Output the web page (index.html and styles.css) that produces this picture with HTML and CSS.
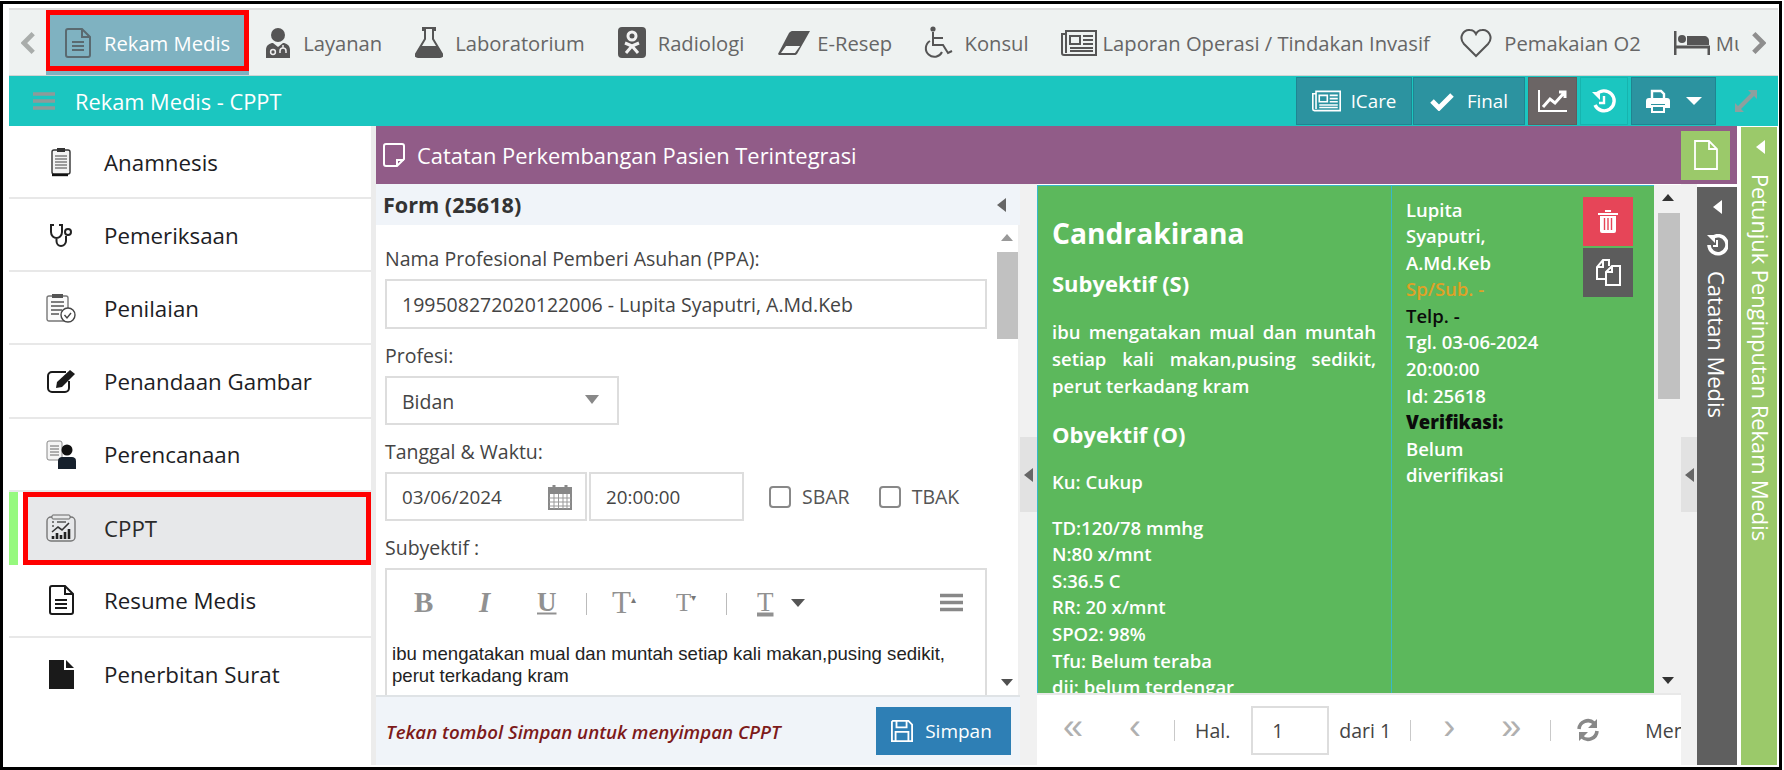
FILE: index.html
```html
<!DOCTYPE html>
<html lang="id">
<head>
<meta charset="utf-8">
<title>Rekam Medis - CPPT</title>
<link rel="stylesheet" href="styles.css">
</head>
<body>
<div class="frame">
  <nav class="tabbar">
    <svg class="chev" viewBox="0 0 16 24"><path d="M13 2 3 12l10 10" fill="none" stroke="#a9adab" stroke-width="5"/></svg>
    <div class="tabs">
      <a class="tab active"><svg class="ti" width="28" height="32" viewBox="0 0 28 32"><path d="M2 4a2 2 0 0 1 2-2h14l8 8v18a2 2 0 0 1-2 2H4a2 2 0 0 1-2-2zM18 2v8h8M8 15h12M8 19h12M8 23h12" fill="none" stroke="#5a6a70" stroke-width="2"/></svg>Rekam Medis</a>
      <a class="tab"><svg class="ti" width="26" height="32" viewBox="0 0 26 32"><circle cx="13" cy="8" r="7" fill="#555"/><path d="M1 31v-8c0-5 4-7 7-7l5 4 5-4c3 0 7 2 7 7v8z" fill="#555"/><circle cx="8" cy="25" r="2.4" fill="none" stroke="#eee" stroke-width="1.5"/><path d="M18 18v3m-3 5v-2a3 3 0 0 1 6 0v2" fill="none" stroke="#eee" stroke-width="1.5"/></svg>Layanan</a>
      <a class="tab"><svg class="ti" width="28" height="31" viewBox="0 0 28 31"><path d="M8 1h12v2h-2v9l9 15c1 2 0 3-2 3H3c-2 0-3-1-2-3l9-15V3H8z" fill="none" stroke="#555" stroke-width="2"/><path d="M6 19h16l5 9c0 2-1 2-2 2H3c-1 0-2 0-2-2z" fill="#555"/></svg>Laboratorium</a>
      <a class="tab"><svg class="ti" width="28" height="31" viewBox="0 0 28 31"><rect width="28" height="31" rx="4" fill="#555"/><circle cx="14" cy="9" r="4" fill="none" stroke="#f2f2f2" stroke-width="3"/><path d="m7 16 7 3 7-3M14 19l-6 7M14 19l6 7" fill="none" stroke="#f2f2f2" stroke-width="3"/></svg>Radiologi</a>
      <a class="tab tab-tight"><svg class="ti" width="34" height="26" viewBox="0 0 34 26"><path d="M1 24 12 3c1-1 2-2 3-2h18L20 24c-1 1-2 1-3 1H2z" fill="#555"/><path d="M4 23 9 16h14l-5 7z" fill="#f2f5f4"/></svg>E-Resep</a>
      <a class="tab tab-konsul"><svg class="ti" width="30" height="33" viewBox="0 0 30 33"><circle cx="10" cy="3" r="2.6" fill="#555"/><path d="M10 6v13h10l5 8 4-2M10 12h10M7 15a8.5 8.5 0 1 0 12 11" fill="none" stroke="#555" stroke-width="2"/></svg>Konsul</a>
      <a class="tab tab-tight"><svg class="ti" width="36" height="26" viewBox="0 0 36 26"><path d="M5 3V1h30v24H3a2 2 0 0 1-2-2V4h4v19" fill="none" stroke="#555" stroke-width="2"/><path d="M9 6h10v8H9z" fill="none" stroke="#555" stroke-width="2"/><path d="M22 6h10M22 10h10M22 14h10M9 18h23M9 21h23" stroke="#555" stroke-width="2"/></svg>Laporan Operasi / Tindakan Invasif</a>
      <a class="tab"><svg class="ti" width="32" height="30" viewBox="0 0 32 30"><path d="M16 28 4 16C-2 9 4 1 10 2c3 0 5 2 6 4 1-2 3-4 6-4 6-1 12 7 6 14z" fill="none" stroke="#555" stroke-width="2"/></svg>Pemakaian O2</a>
      <a class="tab tab-tight"><svg class="ti" width="36" height="26" viewBox="0 0 36 26"><path d="M1 1v24M35 25V17H1" fill="none" stroke="#555" stroke-width="3"/><circle cx="8" cy="9" r="4" fill="#555"/><path d="M13 6h17c3 0 5 2 5 5v4H13z" fill="#555"/></svg>Mu</a>
    </div>
    <svg class="chev" viewBox="0 0 16 24"><path d="m3 2 10 10L3 22" fill="none" stroke="#8e8e8e" stroke-width="5"/></svg>
  </nav>

  <header class="appbar">
    <svg class="burger" width="24" height="20" viewBox="0 0 24 20"><path d="M1 3h22M1 10h22M1 17h22" stroke="#8e9a99" stroke-width="3.4"/></svg>
    <h1 class="apptitle">Rekam Medis - CPPT</h1>
    <div class="tools">
      <button class="tool w-icare"><svg width="29" height="22" viewBox="0 0 36 26"><path d="M5 3V1h30v24H3a2 2 0 0 1-2-2V4h4v19" fill="none" stroke="#fff" stroke-width="2"/><path d="M9 6h10v8H9z" fill="none" stroke="#fff" stroke-width="2"/><path d="M22 6h10M22 10h10M22 14h10M9 18h23M9 21h23" stroke="#fff" stroke-width="2"/></svg>ICare</button>
      <button class="tool w-final"><svg width="24" height="20" viewBox="0 0 24 20"><path d="m2 10 7 7L22 4" fill="none" stroke="#fff" stroke-width="5"/></svg>Final</button>
      <button class="tool tool-dark"><svg width="30" height="24" viewBox="0 0 30 24"><path d="M1 1v21h28" fill="none" stroke="#fff" stroke-width="2"/><path d="m5 18 7-8 5 4 9-10M21 3h6v6" fill="none" stroke="#fff" stroke-width="3"/></svg></button>
      <button class="tool tool-teal"><svg width="24" height="24" viewBox="0 0 24 24"><path d="M4 6a10 10 0 1 1-1 10" fill="none" stroke="#fff" stroke-width="3.4"/><path d="M0 3h8v8z" fill="#fff"/><path d="M12 7v7H7" fill="none" stroke="#fff" stroke-width="2.4"/></svg></button>
      <button class="tool w-print"><svg width="24" height="24" viewBox="0 0 24 24"><path d="M6 9V2h9l3 3v4" fill="none" stroke="#fff" stroke-width="2.4"/><path d="M3 9h18a3 3 0 0 1 3 3v7h-5v-4H5v4H0v-7a3 3 0 0 1 3-3z" fill="#fff"/><path d="M6 17h12v6H6z" fill="none" stroke="#fff" stroke-width="2"/></svg><span class="caret-w"></span></button>
      <svg class="expand" width="24" height="24" viewBox="0 0 24 24"><path d="m14 1h9v9l-3-3L7 20l3 3H1v-9l3 3L17 4z" fill="#8e9f9e"/></svg>
    </div>
  </header>

  <div class="workspace">
    <aside class="sidebar">
      <a class="menu-item"><svg class="mi" width="22" height="30" viewBox="0 0 22 30"><rect x="2" y="3" width="18" height="24" rx="2" fill="#f3f3f3" stroke="#333" stroke-width="1.4"/><path d="M7 1h8v4H7z" fill="#333"/><path d="M5 9h12M5 12h12M5 15h12M5 18h12M5 21h12" stroke="#444" stroke-width="1.2"/><path d="M2 28h16" stroke="#111" stroke-width="2.4"/></svg>Anamnesis</a>
      <a class="menu-item"><svg class="mi" width="24" height="24" viewBox="0 0 24 24"><path d="M5 2H2v7c0 4 3 6 5.500 6S13 13 13 9V2h-3M7.500 15v3c0 3 2 5 4.500 5s5-2 5-5v-5" fill="none" stroke="#222" stroke-width="2"/><circle cx="19" cy="9" r="3" fill="none" stroke="#222" stroke-width="2"/></svg>Pemeriksaan</a>
      <a class="menu-item"><svg class="mi" width="30" height="30" viewBox="0 0 30 30"><rect x="1" y="3" width="21" height="25" rx="2" fill="#fafafa" stroke="#777" stroke-width="1.4"/><path d="M6 1h11v4H6z" fill="#555"/><path d="M5 9h13M5 13h13M5 17h11M5 21h8" stroke="#555" stroke-width="1.4"/><circle cx="22" cy="22" r="7" fill="#fff" stroke="#444" stroke-width="1.4"/><path d="m18.500 22 2.500 3 4-5" fill="none" stroke="#444" stroke-width="1.4"/></svg>Penilaian</a>
      <a class="menu-item"><svg class="mi" width="30" height="24" viewBox="0 0 30 24"><path d="M20 3H6a4 4 0 0 0-4 4v12a4 4 0 0 0 4 4h13a4 4 0 0 0 4-4v-7" fill="none" stroke="#1a1a1a" stroke-width="2"/><path d="m11 13 13-12 5 4-13 13-6 1z" fill="#1a1a1a"/></svg>Penandaan Gambar</a>
      <a class="menu-item"><svg class="mi" width="30" height="30" viewBox="0 0 30 30"><rect x="1" y="2" width="15" height="19" rx="2" fill="#f5f5f5" stroke="#888"/><path d="M4 7h9M4 10h9M4 13h9M4 16h9" stroke="#666"/><circle cx="21" cy="11" r="5.500" fill="#111"/><path d="M12 30v-8c0-3 2-4 4-4h10c2 0 4 1 4 4v8z" fill="#16202c"/></svg>Perencanaan</a>
      <a class="menu-item menu-active"><svg class="mi" width="30" height="28" viewBox="0 0 30 28"><rect x="1" y="3" width="28" height="24" rx="4" fill="none" stroke="#777" stroke-width="1.4"/><rect x="6" y="1" width="18" height="4" rx="1" fill="#e8e9ea" stroke="#666"/><path d="M6 8h2M11 8h9M6 12h2" stroke="#555" stroke-width="1.4"/><path d="m6 18 6-5 4 3 7-7" fill="none" stroke="#333" stroke-width="1.6"/><path d="M7 25v-3m4 3v-6m4 6v-4m4 4v-7m4 7v-10" stroke="#222" stroke-width="2.600"/></svg>CPPT</a>
      <a class="menu-item"><svg class="mi" width="26" height="30" viewBox="0 0 26 30"><path d="M2 3a2 2 0 0 1 2-2h13l8 8v18a2 2 0 0 1-2 2H4a2 2 0 0 1-2-2zM17 1v8h8M7 15h12M7 19h12M7 23h12" fill="none" stroke="#1a1a1a" stroke-width="2"/></svg>Resume Medis</a>
      <a class="menu-item menu-last"><svg class="mi" width="26" height="30" viewBox="0 0 26 30"><path d="M1 1h15v10h10v19H1zM18 1l8 8h-8z" fill="#1a1a1a"/></svg>Penerbitan Surat</a>
    </aside>

    <main class="content">
      <div class="purple">
        <svg width="22" height="24" viewBox="0 0 22 24"><path d="M3 1h16a2 2 0 0 1 2 2v13l-7 7H3a2 2 0 0 1-2-2V3a2 2 0 0 1 2-2zM14 23v-6h7" fill="none" stroke="#fff" stroke-width="2"/></svg>
        <h2 class="purple-title">Catatan Perkembangan Pasien Terintegrasi</h2>
        <button class="new-btn"><svg width="24" height="30" viewBox="0 0 24 30"><path d="M1 1h14l8 8v20H1zM15 1v8h8" fill="none" stroke="#fff" stroke-width="1.800"/></svg></button>
      </div>
      <div class="panes">
        <section class="form-pane">
          <div class="form-head"><span>Form (25618)</span><span class="arrow-left"></span></div>
          <div class="form-scroll">
            <div class="form-body">
              <div class="field">
                <label class="lbl">Nama Profesional Pemberi Asuhan (PPA):</label>
                <div class="input input-ppa">199508272020122006 - Lupita Syaputri, A.Md.Keb</div>
              </div>
              <div class="field">
                <label class="lbl">Profesi:</label>
                <div class="input input-sel">Bidan<span class="sel-caret"></span></div>
              </div>
              <div class="field field-date">
                <label class="lbl">Tanggal &amp; Waktu:</label>
                <div class="date-row">
                  <div class="input input-date">03/06/2024
                    <svg width="24" height="26" viewBox="0 0 24 26"><path d="M1 4h22v21H1z" fill="none" stroke="#888" stroke-width="2"/><path d="M1 5h22v5H1z" fill="#888"/><path d="M6 1v6M18 1v6" stroke="#888" stroke-width="3"/><path d="M1 14h22M1 18h22M1 22h22M6 10v15M10.500 10v15M15 10v15M19 10v15" stroke="#999"/></svg>
                  </div>
                  <div class="input input-time">20:00:00</div>
                  <label class="check c-sbar"><span class="box"></span>SBAR</label>
                  <label class="check"><span class="box"></span>TBAK</label>
                </div>
              </div>
              <div class="field">
                <label class="lbl">Subyektif :</label>
                <div class="editor">
                  <div class="toolbar">
                    <span class="tb tb-b">B</span><span class="tb tb-i">I</span><span class="tb tb-u">U</span>
                    <span class="tb-sep"></span>
                    <span class="tb tb-t1">T<small>▴</small></span><span class="tb tb-t2">T<small>▾</small></span>
                    <span class="tb-sep s2"></span>
                    <span class="tb tb-t3">T</span><span class="caret-g"></span>
                    <svg class="tb-menu" width="23" height="19" viewBox="0 0 23 19"><path d="M0 2.500h23M0 9.500h23M0 16.500h23" stroke="#888" stroke-width="3.600"/></svg>
                  </div>
                  <p class="editor-text">ibu mengatakan mual dan muntah setiap kali makan,pusing sedikit, perut terkadang kram</p>
                </div>
              </div>
            </div>
            <div class="vscroll vs-form"><span class="up"></span><span class="thumb"></span><span class="down"></span></div>
          </div>
          <div class="form-foot">
            <em class="hint">Tekan tombol Simpan untuk menyimpan CPPT</em>
            <button class="save"><svg width="22" height="22" viewBox="0 0 24 24"><path d="M2 1h17l4 4v18H1V2zM6 1v7h11V1M5 23v-10h14v10" fill="none" stroke="#fff" stroke-width="2"/></svg>Simpan</button>
          </div>
        </section>

        <div class="split"><span class="split-top"><span class="arrow-left"></span></span></div>

        <section class="grid-pane">
          <div class="grid-wrap">
            <div class="card">
              <div class="cell-a">
                <h3 class="name">Candrakirana</h3>
                <h4 class="sec">Subyektif (S)</h4>
                <p class="para">ibu mengatakan mual dan muntah setiap kali makan,pusing sedikit, perut terkadang kram</p>
                <h4 class="sec sec2">Obyektif (O)</h4>
                <p class="plain ku">Ku: Cukup</p>
                <p class="plain vit">TD:120/78 mmhg<br>N:80 x/mnt<br>S:36.5 C<br>RR: 20 x/mnt<br>SPO2: 98%<br>Tfu: Belum teraba<br>djj: belum terdengar</p>
              </div>
              <div class="cell-b">
                <div class="meta">Lupita<br>Syaputri,<br>A.Md.Keb<br><span class="orange">Sp/Sub. -</span><br><span class="black">Telp. -</span><br>Tgl. 03-06-2024<br>20:00:00<br>Id: 25618<br><b class="black">Verifikasi:</b><br>Belum<br>diverifikasi</div>
                <div class="acts">
                  <button class="act act-del"><svg width="20" height="24" viewBox="0 0 20 24"><path d="M7 3V1h6v2M0 4h20v2H0zM2 7h16v15a2 2 0 0 1-2 2H4a2 2 0 0 1-2-2z" fill="#fff"/><path d="M6.500 9v12M10 9v12M13.500 9v12" stroke="#e64558" stroke-width="1.400"/></svg></button>
                  <button class="act act-copy"><svg width="26" height="28" viewBox="0 0 26 28"><path d="M10 21H2V9l6-7h6v6M2 9h6V2M11 14l6-6h8v19H11zM11 14h6V8" fill="none" stroke="#fff" stroke-width="2"/></svg></button>
                </div>
              </div>
            </div>
            <div class="vscroll vs-grid"><span class="up"></span><span class="thumb"></span><span class="down"></span></div>
          </div>
          <div class="pager">
            <span class="pg pg1">«</span><span class="pg pg2">‹</span><span class="pg-sep"></span>
            <span class="pg-t hal">Hal.</span><span class="pg-input">1</span><span class="pg-t dari">dari 1</span>
            <span class="pg-sep sep2"></span><span class="pg pg3">›</span><span class="pg pg4">»</span><span class="pg-sep sep3"></span>
            <svg class="pg-ref" width="22" height="24" viewBox="0 0 22 24"><path d="M2 11a9 9 0 0 1 15-6M20 13a9 9 0 0 1-15 6" fill="none" stroke="#888" stroke-width="3.600"/><path d="M20 1v9h-9zM2 23v-9h9z" fill="#888"/></svg>
            <span class="pg-t men">Men</span>
          </div>
        </section>

        <div class="split split2"><span class="split-top"><span class="arrow-left"></span></span></div>

        <aside class="side-dark">
          <span class="arrow-white"></span>
          <svg class="dark-ico" width="22" height="22" viewBox="0 0 22 22"><path d="M6 4a9 9 0 1 1-3 7" fill="none" stroke="#fff" stroke-width="3.600"/><path d="M1 1h8v8z" fill="#fff"/><path d="M11 6v6H7" fill="none" stroke="#fff" stroke-width="2"/></svg>
          <span class="vtext">Catatan Medis</span>
        </aside>
      </div>
    </main>

    <aside class="side-green">
      <span class="arrow-white"></span>
      <span class="vtext">Petunjuk Penginputan Rekam Medis</span>
    </aside>
  </div>
</div>
</body>
</html>
```
FILE: styles.css
```css
* { box-sizing: border-box; }
html, body { margin: 0; padding: 0; background: #fff; }
body { font-family: "Open Sans", "Noto Sans", sans-serif; color: #333; width: 1784px; height: 770px; overflow: hidden; }
h1, h2, h3, h4, p { margin: 0; font-weight: inherit; }
button { font: inherit; border: 0; padding: 0; }

.frame { width: 1782px; height: 769px; margin: 1px 0 0 0; border: 3px solid #000; padding: 4px 1px 2px 6px; display: flex; flex-direction: column; overflow: hidden; background: #fff; }

/* top tabs */
.tabbar { height: 68px; flex: none; display: flex; align-items: center; background: #eef2f1; border-top: 2px solid #ddd; border-bottom: 1px solid #cfd4d3; padding: 0 12px; }
.chev { width: 15px; height: 24px; flex: none; }
.tabs { flex: 1; height: 100%; display: flex; overflow: hidden; margin-left: 10px; margin-right: 12px; min-width: 0; }
.tab { flex: none; display: flex; align-items: center; padding: 0 16.5px; font-size: 20.200px; color: #666; white-space: nowrap; position: relative; }
.ti { margin-right: 12px; flex: none; }
.tab-tight { padding-right: 14px; }
.tab-tight .ti { margin-right: 6px; }
.tab-konsul { padding-right: 15.500px; }
.tab.active { background: #7fb2c1; color: #fff; padding: 0 18.500px 0 18px; }
.tab.active::after { content: ""; position: absolute; left: -1px; right: 0; top: 0; bottom: 4px; border: 5px solid #f00; }

/* teal bar */
.appbar { height: 50px; flex: none; display: flex; align-items: center; background: #1bc6c0; padding-left: 23px; }
.burger { flex: none; }
.apptitle { font-size: 21.800px; color: #fff; margin-left: 19px; }
.tools { margin-left: auto; height: 100%; display: flex; align-items: center; gap: 1px; padding-right: 20px; }
.tool { height: 48px; display: flex; align-items: center; justify-content: center; gap: 10px; background: #2c93a0; border: 1px solid #1f8591; color: #fff; font-size: 18.800px; margin-bottom: 1px; }
.w-icare { width: 116px; }
.w-final { width: 112px; gap: 13px; margin-right: 2px; }
.tool-dark { width: 49px; background: #6b6565; border-color: #625c5c; margin-right: 2px; }
.tool-teal { width: 48px; background: #1bc6c0; border-color: #17b4ae; margin-right: 2px; }
.w-print { width: 85px; gap: 16px; }
.caret-w { width: 0; height: 0; border-left: 8px solid transparent; border-right: 8px solid transparent; border-top: 8px solid #fff; }
.expand { margin-left: 17px; }

.workspace { flex: 1; min-height: 0; display: flex; }

/* sidebar */
.sidebar { width: 367px; flex: none; background: #fff; border-right: 5px solid #ececec; display: flex; flex-direction: column; }
.menu-item { height: 73.140px; flex: none; display: flex; align-items: center; border-bottom: 2px solid #e8e8e8; font-size: 22.300px; color: #1d1d24; position: relative; padding: 1px 0 0 95px; }
.mi { position: absolute; left: 52px; top: 50%; transform: translate(-50%, -50%); }
.menu-active { background: #e7e8ea; border-bottom: 0; color: #2a2a2a; padding-top: 0; }
.menu-active::before { content: ""; position: absolute; left: 0; top: 0; bottom: 0; width: 19px; background: linear-gradient(90deg, #96f97e 9px, #fff 9px); }
.menu-active::after { content: ""; position: absolute; left: 14px; right: 0; top: 0; bottom: 0; border: 5px solid #f00; }
.menu-active .mi { z-index: 1; }
.menu-last { border-bottom: 0; padding-top: 0; }

/* center */
.content { width: 1361px; flex: none; display: flex; flex-direction: column; }
.purple { height: 58px; flex: none; background: #915c88; display: flex; align-items: center; padding: 0 7px 0 7px; color: #fff; }
.purple-title { font-size: 21.900px; margin-left: 12px; }
.new-btn { margin-left: auto; width: 49px; height: 49px; background: #9bc96a; display: flex; align-items: center; justify-content: center; }
.panes { flex: 1; min-height: 0; display: flex; }

/* form */
.form-pane { width: 644px; flex: none; display: flex; flex-direction: column; background: #fff; }
.form-head { height: 41px; flex: none; background: #f0f4f9; display: flex; align-items: center; justify-content: space-between; padding: 0 14px 0 7px; font-size: 21.600px; font-weight: 700; color: #333; }
.arrow-left { width: 0; height: 0; border-top: 7px solid transparent; border-bottom: 7px solid transparent; border-right: 9px solid #666; display: block; }
.form-scroll { flex: 1; min-height: 0; display: flex; overflow: hidden; border-bottom: 2px solid #dfe3e6; }
.form-body { width: 620px; flex: none; padding: 21px 9px 0 9px; }
.field { margin-bottom: 14px; }
.field-date { margin-top: 1px; }
.lbl { display: block; height: 24px; line-height: 24px; font-size: 19.500px; margin-bottom: 9px; color: #444; padding-top: 1px; }
.input { border: 2px solid #ddd; background: #fff; display: flex; align-items: center; font-size: 19.500px; color: #444; padding: 1px 0 0 15px; }
.input-ppa { height: 50px; }
.input-sel { height: 49px; width: 234px; position: relative; }
.sel-caret { position: absolute; left: 198px; top: 17px; width: 0; height: 0; border-left: 7.500px solid transparent; border-right: 7.500px solid transparent; border-top: 9px solid #888; }
.date-row { display: flex; align-items: center; height: 49px; gap: 2px; }
.input-date { width: 202px; height: 49px; justify-content: space-between; padding-right: 13px; font-size: 18.800px; }
.input-time { width: 155px; height: 49px; font-size: 18.800px; }
.check { display: flex; align-items: center; font-size: 19.500px; color: #555; margin-left: 25px; }
.c-sbar { margin-left: 23px; margin-right: 2px; }
.box { width: 22px; height: 22px; border: 2px solid #888; border-radius: 4px; margin-right: 11px; background: #fff; }
.editor { margin-top: 2px; height: 200px; border: 2px solid #ddd; padding: 0 4px; }
.toolbar { height: 64px; display: flex; align-items: center; position: relative; color: #999; }
.tb { font-family: "Liberation Serif", serif; font-size: 29px; color: #919191; position: absolute; top: 50%; transform: translateY(-50%); line-height: 1; }
.tb small { font-size: 10px; font-family: "Liberation Sans", sans-serif; vertical-align: 10px; color: #777; }
.tb-b { left: 23px; font-weight: 700; }
.tb-i { left: 88px; font-style: italic; font-weight: 700; }
.tb-u { left: 146px; text-decoration: underline; font-weight: 700; font-size: 27px; }
.tb-t1 { left: 221px; font-size: 31px; }
.tb-t2 { left: 285px; font-size: 25px; }
.tb-t3 { left: 366px; font-size: 27px; text-decoration: underline; text-decoration-thickness: 4px; }
.tb-sep { position: absolute; left: 195px; top: 23px; height: 22px; width: 1px; background: #bbb; }
.tb-sep.s2 { left: 335px; }
.caret-g { position: absolute; left: 400px; top: 29px; width: 0; height: 0; border-left: 7.500px solid transparent; border-right: 7.500px solid transparent; border-top: 8px solid #555; }
.tb-menu { position: absolute; right: 18px; top: 23px; }
.editor-text { font-family: "Liberation Sans", Arial, sans-serif; font-size: 18.600px; line-height: 22px; color: #222; padding-top: 9px; margin-right: 18px; margin-left: 1px; }

.vscroll { flex: none; position: relative; }
.vs-form { width: 24px; background: #fff; border-right: 2px solid #f0f0f0; }
.vs-form .thumb { position: absolute; left: 1px; top: 27px; width: 21px; height: 87px; background: #c1c1c1; }
.vs-form .up, .vs-grid .up { position: absolute; left: 5px; top: 9px; width: 0; height: 0; border-left: 6px solid transparent; border-right: 6px solid transparent; border-bottom: 7px solid #999; }
.vs-form .down, .vs-grid .down { position: absolute; left: 5px; bottom: 9px; width: 0; height: 0; border-left: 6px solid transparent; border-right: 6px solid transparent; border-top: 7px solid #505050; }
.form-foot { height: 68px; flex: none; background: #f0f4f9; display: flex; align-items: center; justify-content: space-between; padding: 0 9px 0 10px; }
.hint { font-size: 18.700px; font-weight: 600; color: #7d1a1a; }
.save { width: 135px; height: 48px; background: #2e7fb5; color: #fff; display: flex; align-items: center; justify-content: center; gap: 12px; font-size: 19px; padding-right: 4px; }

.split { width: 17px; flex: none; background: #f1f1f1; }
.split-top { display: flex; align-items: center; justify-content: center; height: 75px; margin-top: 253px; background: #e2e2e2; }
.split2 { width: 16px; }

/* grid */
.grid-pane { width: 644px; flex: none; display: flex; flex-direction: column; padding-top: 1px; }
.grid-wrap { height: 508px; flex: none; display: flex; }
.card { width: 617px; flex: none; background: #5cb85c; display: flex; overflow: hidden; border-top: 1px solid #37b8c9; border-left: 1px solid #37b8c9; color: #fff; }
.cell-a { width: 354px; flex: none; border-right: 1px solid #37b8c9; padding: 27px 15px 0 14px; font-weight: 600; font-size: 18.500px; }
.name { font-size: 28.200px; font-weight: 700; line-height: 40px; }
.sec { font-size: 22px; font-weight: 700; line-height: 30px; margin-top: 15px; }
.sec2 { margin-top: 20px; }
.para { text-align: justify; line-height: 27px; margin-top: 20px; }
.plain { line-height: 26.600px; }
.ku { margin-top: 20px; }
.vit { margin-top: 19px; }
.cell-b { flex: 1; display: flex; padding: 10.500px 0 0 14px; position: relative; font-size: 18.500px; font-weight: 600; }
.meta { line-height: 26.600px; width: 177px; }
.orange { color: #e0a126; }
.black { color: #0b0b0b; }
.acts { display: flex; flex-direction: column; gap: 2px; }
.act { width: 50px; height: 49px; display: flex; align-items: center; justify-content: center; }
.act-del { background: #e64558; }
.act-copy { background: #5c5c5c; }
.vs-grid { width: 27px; background: #f1f1f1; }
.vs-grid .thumb { position: absolute; left: 4px; top: 28px; width: 22px; height: 186px; background: #c1c1c1; }
.vs-grid .up { border-bottom-color: #333; top: 9px; left: 8px; }
.vs-grid .down { border-top-color: #333; bottom: 9px; left: 8px; }

/* pager */
.pager { flex: 1; min-height: 0; background: #fff; border-top: 2px solid #e8e8e8; display: flex; align-items: center; overflow: hidden; white-space: nowrap; color: #444; font-size: 19.500px; }
.pg { font-family: "Liberation Sans", sans-serif; font-size: 36px; line-height: 1; color: #b0b0b0; text-align: center; width: 62px; flex: none; margin-top: -6px; }
.pg1 { margin-left: 5px; }
.pg-sep { width: 1px; height: 21px; background: #c9c9c9; flex: none; margin: 0 6px 0 8px; }
.hal { margin-left: 14px; }
.pg-input { width: 78px; height: 49px; border: 2px solid #ddd; margin-left: 21px; margin-right: 10px; display: flex; align-items: center; padding-left: 19px; flex: none; }
.sep2 { margin-left: 19px; margin-right: 7px; }
.sep3 { margin-left: 8px; margin-right: 26px; }
.pg-ref { flex: none; }
.men { margin-left: 46px; }

/* side panels */
.side-dark { width: 40px; flex: none; background: #5f5f5f; margin-top: 3px; display: flex; flex-direction: column; align-items: center; color: #fff; padding-top: 13px; }
.side-dark .dark-ico { margin: 20px 0 15px; }
.side-green { width: 36px; flex: none; margin-left: 4px; margin-top: 1px; background: #9bc96a; display: flex; flex-direction: column; align-items: center; color: #fff; padding: 13px 0 0 2px; }
.arrow-white { width: 0; height: 0; border-top: 7.500px solid transparent; border-bottom: 7.500px solid transparent; border-right: 9px solid #fff; display: block; flex: none; }
.vtext { writing-mode: vertical-rl; font-size: 22px; white-space: nowrap; }
.side-green .vtext { margin-top: 20px; font-size: 21.800px; }
```
